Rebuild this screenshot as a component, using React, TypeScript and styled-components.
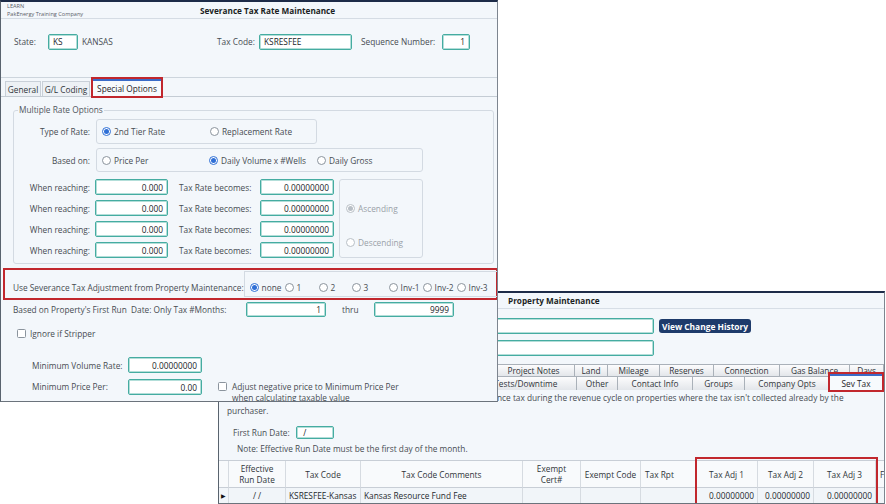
import React from "react";
import styled, { createGlobalStyle, css } from "styled-components";

const GlobalStyle = createGlobalStyle`
  html, body {
    margin: 0;
    padding: 0;
    background: #ffffff;
  }
  body {
    font-family: "Open Sans", "Noto Sans", sans-serif;
    font-size: 8.3px;
    color: #454a50;
  }
  * {
    box-sizing: border-box;
  }
`;

const Desktop = styled.div`
  position: relative;
  width: 886px;
  height: 504px;
  overflow: hidden;
  background: #ffffff;
`;

const Window = styled.div<{ $x: number; $y: number; $w: number; $h: number; $z: number }>`
  position: absolute;
  left: ${(p) => p.$x}px;
  top: ${(p) => p.$y}px;
  width: ${(p) => p.$w}px;
  height: ${(p) => p.$h}px;
  z-index: ${(p) => p.$z};
  display: flex;
  flex-direction: column;
  overflow: hidden;
  background: #f3f7fb;
  border-top: 2px solid #1d2b48;
  border-left: 1px solid #59636e;
  border-right: 1px solid #7d858f;
  border-bottom: 1px solid #6b737c;
`;

/* ---------- shared controls ---------- */

const Label = styled.span<{ $w?: number; $right?: boolean; $ml?: number }>`
  flex: none;
  white-space: nowrap;
  color: #474c52;
  text-align: ${(p) => (p.$right ? "right" : "left")};
  ${(p) => p.$w !== undefined && css`width: ${p.$w}px;`}
  ${(p) => p.$ml !== undefined && css`margin-left: ${p.$ml}px;`}
`;

const Field = styled.div<{ $w: number; $h?: number; $right?: boolean; $ml?: number }>`
  flex: none;
  width: ${(p) => p.$w}px;
  height: ${(p) => p.$h ?? 16}px;
  margin-left: ${(p) => p.$ml ?? 0}px;
  display: flex;
  align-items: center;
  justify-content: ${(p) => (p.$right ? "flex-end" : "flex-start")};
  padding: 0 4px;
  background: #ffffff;
  border: 1px solid #45aca1;
  box-shadow: inset 0 0 0 1px #b3ded9;
  border-radius: 2px;
  color: #202428;
  white-space: nowrap;
  overflow: hidden;
`;

const RadioItem = styled.span<{ $w?: number; $dis?: boolean }>`
  flex: none;
  display: inline-flex;
  align-items: center;
  gap: 3px;
  white-space: nowrap;
  color: ${(p) => (p.$dis ? "#9aa1a8" : "#474c52")};
  ${(p) => p.$w !== undefined && css`width: ${p.$w}px;`}
`;

const RadioDot = styled.span<{ $on?: boolean; $dis?: boolean }>`
  flex: none;
  width: 9px;
  height: 9px;
  border-radius: 50%;
  background: #ffffff;
  border: 1px solid
    ${(p) => (p.$dis ? "#b8bfc6" : p.$on ? "#2f6fd6" : "#8b949d")};
  display: inline-flex;
  align-items: center;
  justify-content: center;

  &::after {
    content: "";
    width: 5px;
    height: 5px;
    border-radius: 50%;
    display: ${(p) => (p.$on ? "block" : "none")};
    background: ${(p) => (p.$dis ? "#b8bfc6" : "#2f6fd6")};
  }
`;

const CheckBox = styled.span`
  flex: none;
  width: 9px;
  height: 9px;
  border: 1px solid #8b949d;
  border-radius: 1.5px;
  background: #ffffff;
`;

const Radio: React.FC<{ label: string; on?: boolean; dis?: boolean; w?: number }> = ({
  label,
  on,
  dis,
  w,
}) => (
  <RadioItem $w={w} $dis={dis}>
    <RadioDot $on={on} $dis={dis} />
    {label}
  </RadioItem>
);

/* ---------- severance window ---------- */

const Header = styled.div`
  flex: none;
  height: 17px;
  display: grid;
  grid-template-columns: 193px 1fr;
  align-items: center;
  padding-left: 6px;
  border-bottom: 1px solid #d5dce4;
`;

const Company = styled.div`
  font-size: 5.6px;
  line-height: 8px;
  color: #5b6168;
`;

const Title = styled.div<{ $pl?: number }>`
  font-weight: 700;
  font-size: 8.2px;
  color: #1b1f24;
  white-space: nowrap;
  ${(p) => p.$pl !== undefined && css`padding-left: ${p.$pl}px;`}
`;

const TopFields = styled.div`
  flex: none;
  height: 59px;
  display: flex;
  align-items: center;
  padding: 0 0 13px 13px;
  border-bottom: 1px solid #cdd5dd;
`;

const TabStrip = styled.div`
  flex: none;
  height: 19px;
  display: flex;
  align-items: flex-end;
  padding-left: 4px;
  border-bottom: 1px solid #c4ccd4;
`;

const Tab = styled.div<{ $w: number }>`
  flex: none;
  width: ${(p) => p.$w}px;
  height: 15px;
  margin-right: 1px;
  display: flex;
  align-items: center;
  justify-content: center;
  background: #edf1f5;
  border: 1px solid #c9d0d8;
  border-bottom: none;
  color: #30353a;
  white-space: nowrap;
`;

const RedFrame = styled.div<{ $mt?: number; $mb?: number }>`
  flex: none;
  position: relative;
  z-index: 2;
  border: 2px solid #c1272d;
  margin-top: ${(p) => p.$mt ?? 0}px;
  margin-bottom: ${(p) => p.$mb ?? 0}px;
`;

const ActiveTab = styled.div<{ $w: number; $h: number }>`
  width: ${(p) => p.$w}px;
  height: ${(p) => p.$h}px;
  display: flex;
  align-items: center;
  justify-content: center;
  background: #f7fafd;
  border-top: 2px solid #3a6bc8;
  color: #1f2328;
  white-space: nowrap;
`;

const Panel = styled.div`
  flex: 1;
  display: flex;
  flex-direction: column;
  padding: 7px 4px 0 12px;
`;

const Group = styled.fieldset`
  margin: 0;
  width: 481px;
  padding: 3px 0 5px 0;
  border: 1px solid #d3dae2;
  border-radius: 3px;
  display: flex;
  flex-direction: column;
  gap: 4px;
`;

const Legend = styled.legend`
  margin-left: 4px;
  padding: 0 1px;
  line-height: 12px;
  color: #50565c;
`;

const OptionRow = styled.div<{ $mt?: number }>`
  display: flex;
  align-items: center;
  gap: 6px;
  ${(p) => p.$mt !== undefined && css`margin-top: ${p.$mt}px;`}
`;

const OptionBox = styled.div<{ $w: number; $h: number }>`
  flex: none;
  width: ${(p) => p.$w}px;
  height: ${(p) => p.$h}px;
  display: flex;
  align-items: center;
  padding-left: 5px;
  border: 1px solid #d3dae2;
  border-radius: 3px;
`;

const RateArea = styled.div`
  display: flex;
  gap: 5px;
  margin-top: 3px;
`;

const RateRows = styled.div`
  display: flex;
  flex-direction: column;
  gap: 5px;
`;

const RateRow = styled.div`
  display: flex;
  align-items: center;
  height: 16px;
`;

const DirectionBox = styled.div`
  flex: none;
  width: 84px;
  display: flex;
  flex-direction: column;
  gap: 23px;
  padding: 23px 0 0 6px;
  border: 1px solid #d3dae2;
  border-radius: 3px;
`;

const AdjustFrame = styled(RedFrame)`
  width: 495px;
  height: 32px;
  margin-left: -10px;
  display: flex;
  align-items: stretch;
  padding-left: 8px;
`;

const AdjustLabel = styled.div`
  width: 234px;
  display: flex;
  align-items: center;
  padding-top: 6px;
  white-space: nowrap;
  color: #474c52;
`;

const AdjustChoices = styled.div`
  flex: 1;
  display: flex;
  align-items: center;
  padding: 6px 0 0 5px;
  margin: 1px 0;
  border: 1px solid #d3dae2;
  border-right: none;
`;

const FlowRow = styled.div<{ $mt: number; $pl?: number; $h?: number; $top?: boolean }>`
  flex: none;
  display: flex;
  align-items: ${(p) => (p.$top ? "flex-start" : "center")};
  margin-top: ${(p) => p.$mt}px;
  padding-left: ${(p) => p.$pl ?? 0}px;
  ${(p) => p.$h !== undefined && css`height: ${p.$h}px;`}
`;

const CheckLabel = styled.div`
  display: flex;
  align-items: center;
  gap: 4px;
  color: #474c52;
  white-space: nowrap;
`;

const NoteBlock = styled.div`
  display: flex;
  gap: 5px;
  margin-left: 16px;
  padding-top: 2px;
  line-height: 11px;
  color: #474c52;
`;

/* ---------- property window ---------- */

const PTitleBar = styled.div`
  flex: none;
  height: 16px;
  display: flex;
  align-items: center;
  border-bottom: 1px solid #d7dee6;
`;

const PFields = styled.div`
  flex: none;
  display: flex;
  flex-direction: column;
  gap: 6px;
  padding: 9px 0 0 181px;
`;

const HistoryButton = styled.div`
  flex: none;
  width: 92px;
  height: 14px;
  margin-left: 5px;
  display: flex;
  align-items: center;
  justify-content: center;
  background: #1e3b6b;
  border-radius: 3px;
  color: #ffffff;
  font-weight: 700;
  font-size: 8.4px;
  white-space: nowrap;
`;

const PTabRow = styled.div<{ $h: number; $mt?: number }>`
  flex: none;
  height: ${(p) => p.$h}px;
  display: flex;
  align-items: flex-end;
  padding-left: 4px;
  margin-top: ${(p) => p.$mt ?? 0}px;
`;

const PTab = styled.div<{ $w: number }>`
  flex: none;
  width: ${(p) => p.$w}px;
  height: 100%;
  display: flex;
  align-items: center;
  justify-content: center;
  background: linear-gradient(#fcfcfd, #e3e6ea);
  border-top: 1px solid #aab1b9;
  border-right: 1px solid #aab1b9;
  color: #30353a;
  white-space: nowrap;
  overflow: hidden;
`;

const SevFrame = styled(RedFrame)`
  width: 56px;
  height: 20px;
  margin-left: -2px;
  margin-top: -4px;
  margin-bottom: -2px;
  align-self: flex-end;
  display: flex;
  align-items: flex-end;
`;

const Description = styled.div`
  flex: none;
  margin-top: 1px;
  padding-left: 8px;
  text-indent: 270px;
  line-height: 13px;
  white-space: nowrap;
  color: #474c52;
`;

const Note = styled.div`
  flex: none;
  margin-top: 4px;
  padding-left: 18px;
  line-height: 12px;
  color: #474c52;
  white-space: nowrap;
`;

const GridWrap = styled.div`
  position: relative;
  flex: none;
  margin-top: 5px;
`;

const Grid = styled.div`
  display: grid;
  grid-template-columns: 10px 57px 75px 162px 58px 60px 55px 62px 56px 62px 1fr;
  grid-template-rows: 27px 15px;
  border-top: 1px solid #c8ced6;
`;

const HeadCell = styled.div<{ $left?: boolean }>`
  display: flex;
  align-items: center;
  justify-content: ${(p) => (p.$left ? "flex-start" : "center")};
  padding: 0 4px;
  text-align: center;
  line-height: 11px;
  background: #f8fafc;
  border-right: 1px solid #d6dbe1;
  border-bottom: 1px solid #c8ced6;
  color: #30353a;
  white-space: nowrap;
  overflow: hidden;
`;

const DataCell = styled.div<{ $right?: boolean; $center?: boolean }>`
  display: flex;
  align-items: center;
  justify-content: ${(p) => (p.$right ? "flex-end" : p.$center ? "center" : "flex-start")};
  padding: 0 3px;
  background: #f1f5f9;
  border-right: 1px solid #d6dbe1;
  color: #25292e;
  white-space: nowrap;
  overflow: hidden;
`;

const AdjHighlight = styled.div`
  position: absolute;
  left: 476px;
  top: -3px;
  width: 183px;
  height: 50px;
  border: 2px solid #c1272d;
  pointer-events: none;
`;

const Arrow = styled.span`
  font-size: 6px;
  color: #111;
`;

const rateRows = [0, 1, 2, 3];

const adjustChoices: { label: string; w: number; on?: boolean }[] = [
  { label: "none", w: 35, on: true },
  { label: "1", w: 34 },
  { label: "2", w: 33 },
  { label: "3", w: 37 },
  { label: "Inv-1", w: 34 },
  { label: "Inv-2", w: 34 },
  { label: "Inv-3", w: 40 },
];

// the first tabs of each row sit behind the severance window
const tabsTop: { label: string; w: number }[] = [
  { label: "", w: 90 },
  { label: "", w: 90 },
  { label: "", w: 90 },
  { label: "Project Notes", w: 82 },
  { label: "Land", w: 33 },
  { label: "Mileage", w: 52 },
  { label: "Reserves", w: 54 },
  { label: "Connection", w: 66 },
  { label: "Gas Balance", w: 70 },
  { label: "Days", w: 34 },
];

const tabsBottom: { label: string; w: number }[] = [
  { label: "", w: 78 },
  { label: "", w: 78 },
  { label: "", w: 78 },
  { label: "Well Tests/Downtime", w: 120 },
  { label: "Other", w: 41 },
  { label: "Contact Info", w: 75 },
  { label: "Groups", w: 52 },
  { label: "Company Opts", w: 85 },
];

const SeveranceWindow: React.FC = () => (
  <Window $x={0} $y={0} $w={498} $h={402} $z={2}>
    <Header>
      <Company>
        <div>LEARN</div>
        <div>PakEnergy Training Company</div>
      </Company>
      <Title>Severance Tax Rate Maintenance</Title>
    </Header>

    <TopFields>
      <Label $w={34}>State:</Label>
      <Field $w={30}>KS</Field>
      <Label $w={135} $ml={4}>KANSAS</Label>
      <Label $w={42}>Tax Code:</Label>
      <Field $w={93}>KSRESFEE</Field>
      <Label $w={81} $ml={9}>Sequence Number:</Label>
      <Field $w={28} $right>1</Field>
    </TopFields>

    <TabStrip>
      <Tab $w={36}>General</Tab>
      <Tab $w={48}>G/L Coding</Tab>
      <RedFrame $mb={-2}>
        <ActiveTab $w={68} $h={17}>Special Options</ActiveTab>
      </RedFrame>
    </TabStrip>

    <Panel>
      <Group>
        <Legend>Multiple Rate Options</Legend>
        <OptionRow>
          <Label $w={76} $right>Type of Rate:</Label>
          <OptionBox $w={221} $h={25}>
            <Radio label="2nd Tier Rate" on w={108} />
            <Radio label="Replacement Rate" />
          </OptionBox>
        </OptionRow>
        <OptionRow>
          <Label $w={76} $right>Based on:</Label>
          <OptionBox $w={327} $h={24}>
            <Radio label="Price Per" w={107} />
            <Radio label="Daily Volume x #Wells" on w={108} />
            <Radio label="Daily Gross" />
          </OptionBox>
        </OptionRow>
        <RateArea>
          <RateRows>
            {rateRows.map((i) => (
              <RateRow key={i}>
                <Label $w={76} $right>When reaching:</Label>
                <Field $w={73} $ml={5} $right>0.000</Field>
                <Label $w={81} $ml={11}>Tax Rate becomes:</Label>
                <Field $w={74} $right>0.00000000</Field>
              </RateRow>
            ))}
          </RateRows>
          <DirectionBox>
            <Radio label="Ascending" on dis />
            <Radio label="Descending" dis />
          </DirectionBox>
        </RateArea>
      </Group>

      <AdjustFrame $mt={4}>
        <AdjustLabel>Use Severance Tax Adjustment from Property Maintenance:</AdjustLabel>
        <AdjustChoices>
          {adjustChoices.map((c) => (
            <Radio key={c.label} label={c.label} on={c.on} w={c.w} />
          ))}
        </AdjustChoices>
      </AdjustFrame>

      <FlowRow $mt={2} $h={15}>
        <Label $w={233}>Based on Property's First Run&nbsp; Date: Only Tax #Months:</Label>
        <Field $w={80} $h={15} $right>1</Field>
        <Label $w={32} $ml={16}>thru</Label>
        <Field $w={80} $h={15} $right>9999</Field>
      </FlowRow>

      <FlowRow $mt={11} $pl={4} $h={10}>
        <CheckLabel>
          <CheckBox />
          Ignore if Stripper
        </CheckLabel>
      </FlowRow>

      <FlowRow $mt={19} $pl={19}>
        <Label $w={96}>Minimum Volume Rate:</Label>
        <Field $w={74} $right>0.00000000</Field>
      </FlowRow>

      <FlowRow $mt={6} $pl={19} $top>
        <Label $w={96} style={{ lineHeight: "16px" }}>Minimum Price Per:</Label>
        <Field $w={74} $right>0.00</Field>
        <NoteBlock>
          <CheckBox style={{ marginTop: 1 }} />
          <div>
            Adjust negative price to Minimum Price Per
            <br />
            when calculating taxable value
          </div>
        </NoteBlock>
      </FlowRow>
    </Panel>
  </Window>
);

const PropertyWindow: React.FC = () => (
  <Window $x={218} $y={291} $w={667} $h={213} $z={1}>
    <PTitleBar>
      <Title $pl={289}>Property Maintenance</Title>
    </PTitleBar>

    <PFields>
      <OptionRow style={{ gap: 0 }}>
        <Field $w={254} />
        <HistoryButton>View Change History</HistoryButton>
      </OptionRow>
      <OptionRow>
        <Field $w={254} />
      </OptionRow>
    </PFields>

    <PTabRow $h={12} $mt={8}>
      {tabsTop.map((t, i) => (
        <PTab key={i} $w={t.w}>
          {t.label}
        </PTab>
      ))}
    </PTabRow>
    <PTabRow $h={14}>
      {tabsBottom.map((t, i) => (
        <PTab key={i} $w={t.w}>
          {t.label}
        </PTab>
      ))}
      <SevFrame>
        <ActiveTab $w={52} $h={16}>Sev Tax</ActiveTab>
      </SevFrame>
    </PTabRow>

    <Description>
      {"nce tax during the revenue cycle on properties where the tax isn't collected already by the"}
      <br />
      purchaser.
    </Description>

    <FlowRow $mt={9} $pl={14} $h={13}>
      <Label $w={63}>First Run Date:</Label>
      <Field $w={38} $h={13}>
        &nbsp;/
      </Field>
    </FlowRow>

    <Note>Note: Effective Run Date must be the first day of the month.</Note>

    <GridWrap>
      <Grid>
        <HeadCell />
        <HeadCell>
          Effective
          <br />
          Run Date
        </HeadCell>
        <HeadCell>Tax Code</HeadCell>
        <HeadCell>Tax Code Comments</HeadCell>
        <HeadCell>
          Exempt
          <br />
          Cert#
        </HeadCell>
        <HeadCell>Exempt Code</HeadCell>
        <HeadCell $left>Tax Rpt</HeadCell>
        <HeadCell>Tax Adj 1</HeadCell>
        <HeadCell>Tax Adj 2</HeadCell>
        <HeadCell>Tax Adj 3</HeadCell>
        <HeadCell $left>F</HeadCell>

        <DataCell $center>
          <Arrow>▶</Arrow>
        </DataCell>
        <DataCell $center>/ /</DataCell>
        <DataCell>KSRESFEE-Kansas</DataCell>
        <DataCell>Kansas Resource Fund Fee</DataCell>
        <DataCell />
        <DataCell />
        <DataCell />
        <DataCell $right>0.00000000</DataCell>
        <DataCell $right>0.00000000</DataCell>
        <DataCell $right>0.00000000</DataCell>
        <DataCell />
      </Grid>
      <AdjHighlight />
    </GridWrap>
  </Window>
);

const App: React.FC = () => (
  <>
    <GlobalStyle />
    <Desktop>
      <PropertyWindow />
      <SeveranceWindow />
    </Desktop>
  </>
);

export default App;
